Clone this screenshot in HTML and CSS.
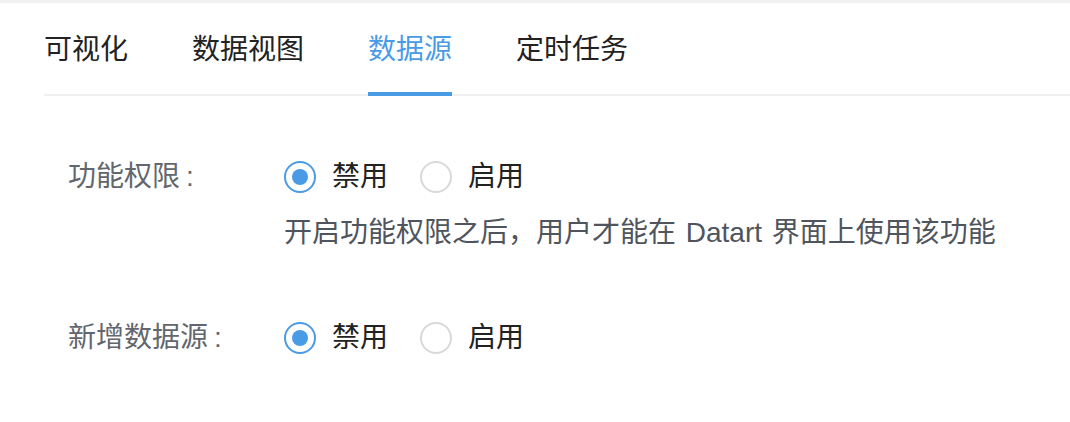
FILE: index.html
```html
<!DOCTYPE html>
<html lang="zh-CN">
<head>
<meta charset="utf-8">
<title>权限设置</title>
<link rel="stylesheet" href="styles.css">
</head>
<body>
<div class="page">
  <nav class="tabs">
    <div class="tab">可视化</div>
    <div class="tab">数据视图</div>
    <div class="tab active">数据源</div>
    <div class="tab">定时任务</div>
  </nav>
  <form class="form">
    <div class="row">
      <div class="label">功能权限<span class="colon">:</span></div>
      <div class="control">
        <div class="radios">
          <label class="radio checked"><span class="dot"></span><span class="rtext">禁用</span></label>
          <label class="radio"><span class="dot"></span><span class="rtext">启用</span></label>
        </div>
        <div class="extra">开启功能权限之后，用户才能在 Datart 界面上使用该功能</div>
      </div>
    </div>
    <div class="row row2">
      <div class="label">新增数据源<span class="colon">:</span></div>
      <div class="control">
        <div class="radios">
          <label class="radio checked"><span class="dot"></span><span class="rtext">禁用</span></label>
          <label class="radio"><span class="dot"></span><span class="rtext">启用</span></label>
        </div>
      </div>
    </div>
  </form>
</div>
</body>
</html>
```

FILE: styles.css
```css
html, body {
  margin: 0;
  padding: 0;
  background: #ffffff;
}

body {
  font-family: "Liberation Sans", "Noto Sans CJK SC", sans-serif;
  font-size: 28px;
  line-height: 44px;
  color: #222222;
}

.page {
  border-top: 3px solid #f0f0f0;
  height: 419px;
}

.tabs {
  display: flex;
  gap: 64px;
  margin-left: 44px;
  border-bottom: 2px solid #f0f0f0;
}

.tab {
  position: relative;
  padding: 25px 0 22px;
  color: #222222;
}

.tab.active {
  color: #4a9be6;
}

.tab.active::after {
  content: "";
  position: absolute;
  left: 0;
  right: 0;
  bottom: -2px;
  height: 4px;
  background: #4a9be6;
}

.form {
  padding-left: 68px;
  padding-top: 59px;
}

.row {
  display: flex;
}

.row2 {
  margin-top: 61px;
}

.label {
  width: 216px;
  flex: none;
  color: #62666d;
}

.colon {
  margin-left: 6px;
}

.control {
  display: flex;
  flex-direction: column;
  gap: 12px;
}

.radios {
  display: flex;
}

.radio {
  display: flex;
  align-items: center;
  margin-right: 16px;
}

.dot {
  box-sizing: border-box;
  width: 32px;
  height: 32px;
  border-radius: 50%;
  border: 2px solid #d9d9d9;
  background: #fff;
  display: flex;
  align-items: center;
  justify-content: center;
}

.radio.checked .dot {
  border-color: #4a9be6;
}

.radio.checked .dot::after {
  content: "";
  width: 16px;
  height: 16px;
  border-radius: 50%;
  background: #4a9be6;
}

.rtext {
  padding: 0 16px;
  color: #222222;
}

.extra {
  color: #50555d;
  word-spacing: 2px;
}
```
